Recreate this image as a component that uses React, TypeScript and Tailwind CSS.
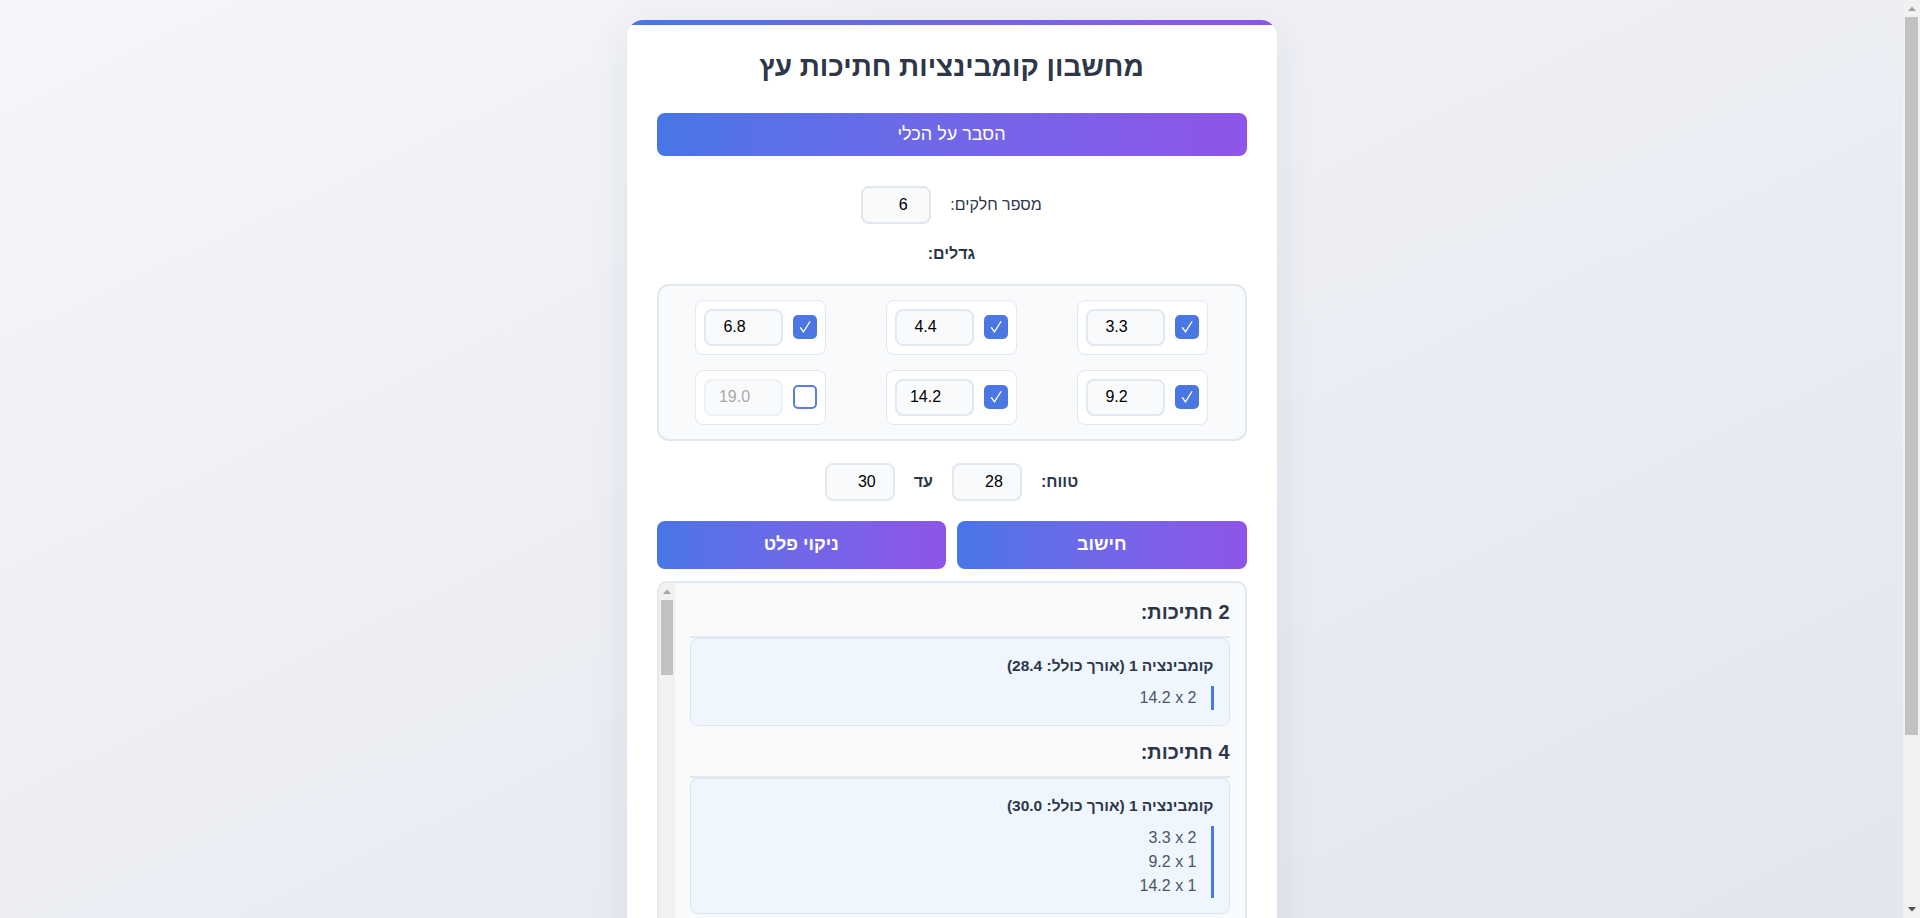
import { useState } from "react"

type Size = { value: string; on: boolean }

const initialSizes: Size[] = [
  { value: "3.3", on: true },
  { value: "4.4", on: true },
  { value: "6.8", on: true },
  { value: "9.2", on: true },
  { value: "14.2", on: true },
  { value: "19.0", on: false },
]

// all multisets of the active sizes whose sum falls inside the range, grouped by piece count
function findCombos(sizes: number[], min: number, max: number) {
  const lo = Math.round(min * 10)
  const hi = Math.round(max * 10)
  const units = sizes.map((s) => Math.round(s * 10)).sort((a, b) => a - b)
  const groups = new Map<number, number[][]>()

  const walk = (start: number, picked: number[], sum: number) => {
    if (picked.length > 0 && sum >= lo && sum <= hi) {
      const list = groups.get(picked.length) ?? []
      list.push(picked)
      groups.set(picked.length, list)
    }
    for (let i = start; i < units.length; i++) {
      if (sum + units[i] > hi) break
      walk(i, [...picked, units[i]], sum + units[i])
    }
  }
  walk(0, [], 0)

  return [...groups.entries()].sort((a, b) => a[0] - b[0])
}

function countPieces(combo: number[]) {
  const counts: { size: number; n: number }[] = []
  combo.forEach((u) => {
    const last = counts[counts.length - 1]
    if (last && last.size === u) last.n++
    else counts.push({ size: u, n: 1 })
  })
  return counts
}

const inputBox =
  "h-[38px] w-[70px] rounded-lg border-2 border-[#e2e8f0] bg-[#f8fafc] pl-[14px] text-center text-[16px] text-black outline-none"

const hideBar = "[scrollbar-width:none] [&::-webkit-scrollbar]:hidden"

function Arrow({ up, dark }: { up?: boolean; dark?: boolean }) {
  return (
    <div className="flex h-[17px] shrink-0 items-center justify-center">
      <svg width="8" height="5" viewBox="0 0 8 5" fill={dark ? "#505050" : "#a3a3a3"}>
        {up ? <path d="M0 5L4 0.5 8 5z" /> : <path d="M0 0L4 4.5 8 0z" />}
      </svg>
    </div>
  )
}

// classic grey scrollbar, drawn since the screenshot shows one
function FakeScrollbar({ thumb, width }: { thumb: string; width: string }) {
  return (
    <div className={`flex shrink-0 flex-col bg-[#f1f1f1] ${width}`}>
      <Arrow up />
      <div className={`mx-[2px] shrink-0 bg-[#c1c1c1] ${thumb}`} />
      <div className="flex-1" />
      <Arrow dark />
    </div>
  )
}

function Checkbox({ checked, onClick }: { checked: boolean; onClick: () => void }) {
  return (
    <button
      onClick={onClick}
      className={
        checked
          ? "flex h-6 w-6 shrink-0 items-center justify-center rounded-[5px] bg-[#4a77e3] text-white"
          : "flex h-6 w-6 shrink-0 items-center justify-center rounded-[5px] border-2 border-[#5b7fd8] bg-white"
      }
    >
      {checked && (
        <svg viewBox="0 0 24 24" className="h-[18px] w-[18px]" fill="none" stroke="white" strokeWidth="1.8" strokeLinecap="round">
          <path d="M6 13l4 5.5L18.5 5" />
        </svg>
      )}
    </button>
  )
}

export default function App() {
  const [parts, setParts] = useState("6")
  const [sizes, setSizes] = useState<Size[]>(initialSizes)
  const [from, setFrom] = useState("28")
  const [to, setTo] = useState("30")

  const active = sizes.filter((s) => s.on).map((s) => parseFloat(s.value))
  const [results, setResults] = useState(() => findCombos(active, 28, 30))

  const toggle = (i: number) =>
    setSizes(sizes.map((s, j) => (j === i ? { ...s, on: !s.on } : s)))

  return (
    <div className="flex h-screen bg-gradient-to-br from-[#f5f6f9] to-[#e3e6ef] font-['Liberation_Sans',Arial,sans-serif]">
      <div className={`min-w-0 flex-1 overflow-y-auto p-5 ${hideBar}`}>
        <div
          dir="rtl"
          className="relative mx-auto max-w-[650px] overflow-hidden rounded-2xl bg-white p-[30px] shadow-[0_10px_40px_rgba(30,40,80,0.08)]"
        >
          <div className="absolute inset-x-0 top-0 h-[5px] bg-gradient-to-r from-[#4776e6] to-[#8e54e9]" />

          <h1 className="mb-[29px] text-center text-[28px] font-bold leading-[1.2] text-[#2d3748]">
            מחשבון קומבינציות חתיכות עץ
          </h1>

          <button className="h-[43px] w-full rounded-lg bg-gradient-to-r from-[#4776e6] to-[#8e54e9] text-[18px] text-white">
            הסבר על הכלי
          </button>

          <div className="mt-[30px] flex items-center justify-center gap-[19px]">
            <label className="text-[16px] text-[#2d3748]">מספר חלקים:</label>
            <input className={inputBox} value={parts} onChange={(e) => setParts(e.target.value)} />
          </div>

          <div className="mt-5 text-center text-[16px] font-bold leading-[19px] text-[#2d3748]">גדלים:</div>

          <div className="mt-[21px] grid grid-cols-3 justify-items-center gap-[15px] rounded-xl border-2 border-[#e2e8f0] bg-[#f8fafc] p-[14px]">
            {sizes.map((s, i) => (
              <div key={i} className="flex items-center gap-2.5 rounded-lg border border-[#e2e8f0] bg-white p-2">
                <Checkbox checked={s.on} onClick={() => toggle(i)} />
                <input
                  dir="ltr"
                  disabled={!s.on}
                  value={s.value}
                  onChange={(e) => setSizes(sizes.map((x, j) => (j === i ? { ...x, value: e.target.value } : x)))}
                  className={
                    s.on
                      ? "h-[37px] w-[79px] rounded-lg border-2 border-[#e2e8f0] bg-[#f8fafc] pr-[18px] text-center text-[16px] text-black outline-none"
                      : "h-[37px] w-[79px] rounded-lg border-2 border-[#edf1f5] bg-[#f9fafc] pr-[18px] text-center text-[16px] text-[#a9a9a9] outline-none"
                  }
                />
              </div>
            ))}
          </div>

          <div className="mt-[22px] flex items-center justify-center gap-[19px]">
            <label className="text-[16px] font-bold text-[#2d3748]">טווח:</label>
            <input className={inputBox} value={from} onChange={(e) => setFrom(e.target.value)} />
            <span className="text-[16px] font-bold text-[#2d3748]">עד</span>
            <input className={inputBox} value={to} onChange={(e) => setTo(e.target.value)} />
          </div>

          <div className="mt-5 grid grid-cols-2 gap-[11px]">
            <button
              onClick={() => setResults(findCombos(active, parseFloat(from), parseFloat(to)))}
              className="h-12 rounded-lg bg-gradient-to-r from-[#4776e6] to-[#8e54e9] text-[18px] font-bold text-white"
            >
              חישוב
            </button>
            <button
              onClick={() => setResults([])}
              className="h-12 rounded-lg bg-gradient-to-r from-[#4776e6] to-[#8e54e9] text-[18px] font-bold text-white"
            >
              ניקוי פלט
            </button>
          </div>

          <div className="mt-3 flex h-[500px] overflow-hidden rounded-[10px] border-2 border-[#e2e8f0] bg-[#f8fafc]">
            <div className={`min-w-0 flex-1 overflow-y-auto p-[15px] ${hideBar}`}>
              {results.map(([k, combos]) => (
                <div key={k} className="mb-3">
                  <h3 className="border-b-2 border-[#e2e8f0] pb-[10px] text-[20px] font-bold leading-7 text-[#2d3748]">
                    {k} חתיכות:
                  </h3>
                  <div className="space-y-2.5">
                    {combos.map((c, i) => (
                      <div key={i} className="rounded-lg border border-[#dce6f1] bg-[#eff6fe] p-[15px]">
                        <div className="text-[15.5px] font-bold leading-6 text-[#2d3748]">
                          קומבינציה {i + 1} (אורך כולל: {(c.reduce((a, b) => a + b, 0) / 10).toFixed(1)})
                        </div>
                        <div className="mt-2 border-r-[3px] border-[#4776e6] pr-[14px] text-[16px] leading-6 text-[#4a5568]">
                          {countPieces(c).map((p) => (
                            <div key={p.size}>
                              <span dir="ltr">
                                {(p.size / 10).toFixed(1)} x {p.n}
                              </span>
                            </div>
                          ))}
                        </div>
                      </div>
                    ))}
                  </div>
                </div>
              ))}
            </div>
            <FakeScrollbar width="w-4" thumb="h-[75px]" />
          </div>
        </div>
      </div>
      <FakeScrollbar width="w-[17px]" thumb="h-[718px]" />
    </div>
  )
}
